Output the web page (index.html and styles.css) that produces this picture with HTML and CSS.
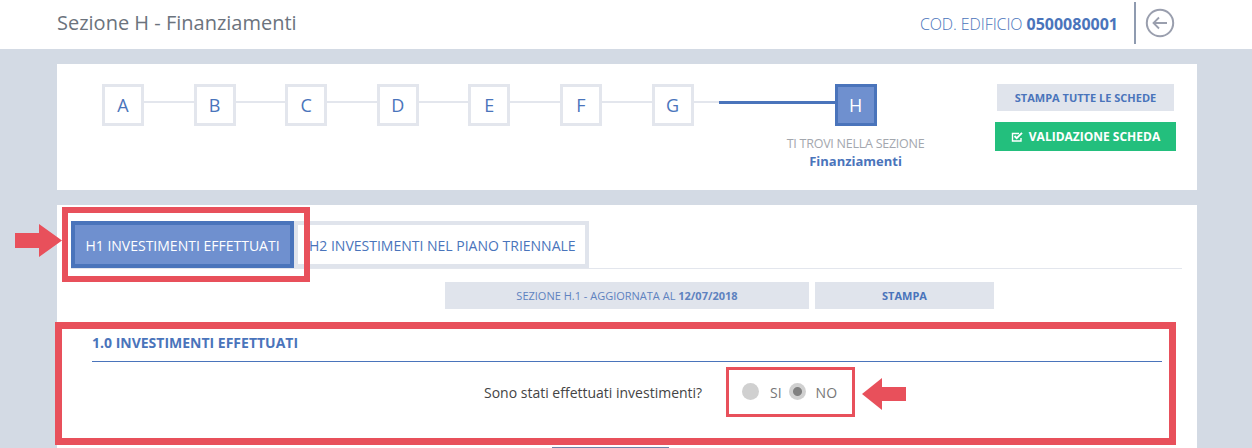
FILE: index.html
```html
<!DOCTYPE html>
<html lang="en">
<head>
  <meta charset="UTF-8">
  <meta name="viewport" content="width=device-width, initial-scale=1.0">
  <title>Sezione H - Finanziamenti</title>
  <link rel="stylesheet" href="styles.css">
</head>
<body>
  <header class="topbar">
    <div class="page-title">Sezione H - Finanziamenti</div>
    <div class="topbar-right">
      <span class="cod">COD. EDIFICIO <strong>0500080001</strong></span>
      <a class="back" href="#">
        <svg width="30" height="30" viewBox="0 0 30 30" fill="none" stroke="#9a9fae">
          <circle cx="15" cy="15" r="13.2" stroke-width="2"/>
          <path d="M22 15H8.5M14 9.5L8.5 15L14 20.5" stroke-width="1.8"/>
        </svg>
      </a>
    </div>
  </header>

  <section class="card card-steps">
    <div class="steps">
      <div class="step">A</div><div class="link"></div>
      <div class="step">B</div><div class="link"></div>
      <div class="step">C</div><div class="link"></div>
      <div class="step">D</div><div class="link"></div>
      <div class="step">E</div><div class="link"></div>
      <div class="step">F</div><div class="link"></div>
      <div class="step">G</div><div class="link link-short"></div><div class="link link-active"></div>
      <div class="step-current">
        <div class="step step-on">H</div>
        <div class="where">TI TROVI NELLA SEZIONE</div>
        <div class="where-name">Finanziamenti</div>
      </div>
    </div>
    <div class="actions">
      <button class="btn btn-grey">STAMPA TUTTE LE SCHEDE</button>
      <button class="btn btn-green">
        <svg width="12" height="12" viewBox="0 0 12 12" fill="none" stroke="#fff">
          <path d="M10 7v3H1.5V2.5H8" stroke-width="1.4"/>
          <path d="M3.5 5L5.7 7.2L11 1.8" stroke-width="1.8"/>
        </svg>
        VALIDAZIONE SCHEDA
      </button>
    </div>
  </section>

  <section class="card card-main">
    <div class="tabs">
      <div class="tab tab-on">H1 INVESTIMENTI EFFETTUATI</div>
      <div class="tab">H2 INVESTIMENTI NEL PIANO TRIENNALE</div>
    </div>
    <div class="infobar">
      <div class="info info-date">SEZIONE H.1 - AGGIORNATA AL <strong>12/07/2018</strong></div>
      <div class="info info-print">STAMPA</div>
    </div>
    <div class="red-section">
      <h3 class="sec-title">1.0 INVESTIMENTI EFFETTUATI</h3>
      <div class="question">
        <span class="q-text">Sono stati effettuati investimenti?</span>
        <div class="radios">
          <span class="radio"></span><span class="r-label r-si">SI</span>
          <span class="radio radio-on"></span><span class="r-label r-no">NO</span>
        </div>
      </div>
    </div>
    <div class="next-btn"></div>
  </section>

  <!-- annotations on top of the screenshot -->
  <div class="mark-tab"></div>
  <svg class="arrow arrow-tab" width="47" height="33" viewBox="0 0 47 33"><path d="M0 9H24V0L47 16.5L24 33V24H0Z" fill="#e8505b"/></svg>
  <svg class="arrow arrow-radio" width="44" height="32" viewBox="0 0 44 32"><path d="M44 9H20V0L0 16L20 32V23H44Z" fill="#e8505b"/></svg>
</body>
</html>
```

FILE: styles.css
```css
html, body { height: 448px; overflow: hidden; }
body { margin: 0; background: #d3dae4; font-family: "Open Sans", sans-serif; color: #4a74bb; position: relative; }

.topbar { height: 49px; background: #fff; display: flex; justify-content: space-between; align-items: center; padding: 0 77px 0 57px; margin-bottom: 15px; }
.page-title { font-size: 20px; color: #6b737d; margin-top: -5px; }
.topbar-right { display: flex; align-items: center; height: 49px; }
.cod { font-size: 16px; font-weight: 300; color: #4a74bb; letter-spacing: -0.1px; margin-top: -1px; }
.cod strong { font-weight: 700; color: #4a74bb; letter-spacing: 0; }
.back { display: flex; border-left: 2px solid #8f9bb0; height: 42px; align-items: center; padding-left: 9px; margin-left: 16px; margin-top: -4px; }

.card { background: #fff; margin: 0 55px 15px 57px; }
.card-steps { height: 126px; padding: 20px 21px 0 45px; box-sizing: border-box; display: flex; justify-content: space-between; }

.steps { display: flex; align-items: flex-start; }
.step { width: 42px; height: 42px; box-sizing: border-box; border: 3px solid #e3e6ed; display: flex; align-items: center; justify-content: center; font-size: 18px; color: #4a74bb; flex: none; }
.link { width: 49.6px; height: 2px; background: #e3e6ed; margin-top: 17px; flex: none; }
.link-short { width: 25px; }
.link-active { width: 116px; height: 3px; background: #4a74bb; }
.step-current { width: 42px; display: flex; flex-direction: column; align-items: center; }
.step-on { background: #6f90cf; border-color: #4a74bb; color: #fff; }
.where { font-size: 12.5px; color: #a3a7ae; white-space: nowrap; margin-top: 10px; line-height: 16px; letter-spacing: -0.25px; }
.where-name { font-size: 13px; font-weight: 700; color: #4a74bb; white-space: nowrap; line-height: 18px; }

.actions { display: flex; flex-direction: column; align-items: center; gap: 11px; }
.btn { border: 0; font-family: inherit; font-weight: 700; padding: 0; display: flex; align-items: center; justify-content: center; }
.btn-grey { width: 177px; height: 27px; background: #e0e4ec; color: #4a74bb; font-size: 11px; }
.btn-green { width: 181px; height: 29px; background: #23bf7d; color: #fff; font-size: 12px; gap: 6px; }

.card-main { height: 243px; margin-bottom: 0; padding: 16px 15px 0 14px; }
.tabs { display: flex; border-bottom: 1px solid #e3e6ed; height: 47px; }
.tab { box-sizing: border-box; height: 47px; border: 4px solid #e0e4ec; padding: 0 10px 0 11px; font-size: 14px; line-height: 41px; white-space: nowrap; width: 295px; }
.tab-on { width: 223px; background: #6f90cf; border-color: #4a74bb; color: #fff; text-align: center; padding: 0; }

.infobar { display: flex; gap: 6px; margin: 13px 0 13px 374px; }
.info { height: 27px; background: #e0e4ec; display: flex; align-items: center; justify-content: center; font-size: 11px; white-space: pre; }
.info-date { width: 364px; color: #5e82bf; }
.info-print { width: 179px; font-weight: 700; }

.red-section { border: 7px solid #e8505b; margin: 0 6px 0 -16px; height: 123px; box-sizing: border-box; padding: 0 7px 0 30px; }
.sec-title { margin: 0; font-size: 14px; font-weight: 700; line-height: 18px; padding: 5px 0 9px; border-bottom: 1px solid #4a74bb; }
.question { display: flex; align-items: center; margin: 5px 0 0 392px; }
.q-text { font-size: 14px; color: #444; margin-right: 24px; width: 218px; white-space: nowrap; }
.radios { border: 3px solid #e8505b; box-sizing: border-box; width: 129px; height: 50px; flex: none; display: flex; align-items: center; padding-left: 13px; }
.radio { width: 17px; height: 17px; border-radius: 50%; background: #d0d0d0; flex: none; margin-top: -2px; }
.radio-on { background: radial-gradient(circle, #808080 0 4px, #d0d0d0 5px); }
.r-label { font-size: 14px; color: #777; margin-left: 11px; }
.r-si { margin-right: 7px; }
.r-no { margin-left: 10px; }

.next-btn { width: 117px; height: 1px; margin: 2px 0 0 481px; background: #6d83a8; }

.mark-tab { position: absolute; left: 62px; top: 207px; width: 248px; height: 75px; box-sizing: border-box; border: 6px solid #e8505b; }
.arrow { position: absolute; }
.arrow-tab { left: 15px; top: 224px; }
.arrow-radio { left: 862px; top: 378px; }
```
